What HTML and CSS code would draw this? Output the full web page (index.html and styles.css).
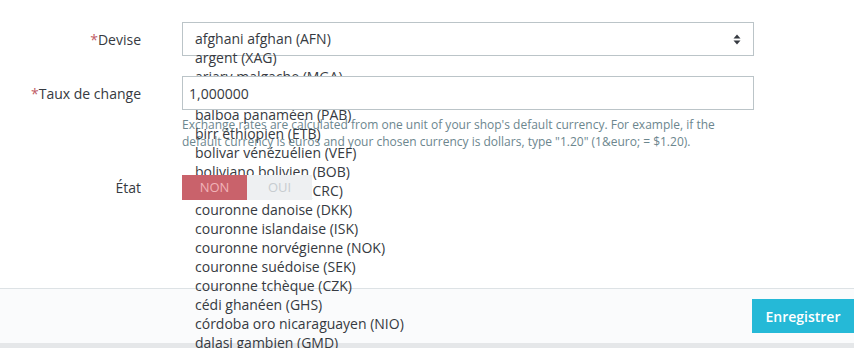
FILE: index.html
```html
<!DOCTYPE html>
<html lang="fr">
<head>
    <meta charset="UTF-8">
    <meta name="viewport" content="width=device-width, initial-scale=1.0">
    <title>Devise</title>
    <link rel="stylesheet" href="styles.css">
</head>
<body>
    <form class="form">
        <div class="row row-select">
            <label class="label"><span class="req">*</span>Devise</label>
            <div class="select">
                <ul class="options">
                    <li>afghani afghan (AFN)</li>
                    <li>argent (XAG)</li>
                    <li>ariary malgache (MGA)</li>
                    <li>baht thaïlandais (THB)</li>
                    <li>balboa panaméen (PAB)</li>
                    <li>birr éthiopien (ETB)</li>
                    <li>bolivar vénézuélien (VEF)</li>
                    <li>boliviano bolivien (BOB)</li>
                    <li>colón costaricain (CRC)</li>
                    <li>couronne danoise (DKK)</li>
                    <li>couronne islandaise (ISK)</li>
                    <li>couronne norvégienne (NOK)</li>
                    <li>couronne suédoise (SEK)</li>
                    <li>couronne tchèque (CZK)</li>
                    <li>cédi ghanéen (GHS)</li>
                    <li>córdoba oro nicaraguayen (NIO)</li>
                    <li>dalasi gambien (GMD)</li>
                </ul>
                <svg class="arrow" width="8" height="11" viewBox="0 0 8 11">
                    <path d="M4 0.5 L7.5 4.5 H0.5 Z M4 10.5 L7.5 6.5 H0.5 Z" fill="#363a41"/>
                </svg>
            </div>
        </div>

        <div class="row row-rate">
            <label class="label" for="rate"><span class="req">*</span>Taux de change</label>
            <div class="control">
                <input type="text" id="rate" class="input" value="1,000000">
                <p class="help">Exchange rates are calculated from one unit of your shop's default currency. For example, if the default currency is euros and your chosen currency is dollars, type "1.20" (1&amp;euro; = $1.20).</p>
            </div>
        </div>

        <div class="row row-state">
            <label class="label">État</label>
            <div class="switch">
                <span class="switch-off">NON</span>
                <span class="switch-on">OUI</span>
            </div>
        </div>
    </form>

    <div class="footer">
        <button type="submit" class="btn-save">Enregistrer</button>
    </div>
    <div class="page-end"></div>
</body>
</html>
```

FILE: styles.css
```css
html,
body {
    overflow: hidden;
}

body {
    margin: 0;
    font-family: "Open Sans", Arial, sans-serif;
    font-size: 14px;
    color: #363a41;
    background: #fff;
}

.form {
    padding-top: 22px;
    height: 266px;
}

.row {
    display: flex;
}

.label {
    width: 141px;
    margin-right: 41px;
    text-align: right;
    flex-shrink: 0;
}

.req {
    color: #c05c67;
}

.row-select {
    height: 34px;
    margin-bottom: 20px;
}

.row-select .label {
    line-height: 36px;
}

.select {
    position: relative;
    box-sizing: border-box;
    width: 572px;
    height: 34px;
    border: 1px solid #bbc4c8;
    padding: 6px 12px 0;
}

.options {
    list-style: none;
    margin: 0;
    padding: 0;
    line-height: 19px;
    white-space: nowrap;
}

.arrow {
    position: absolute;
    right: 12px;
    top: 11px;
}

.row-rate .label {
    line-height: 36px;
}

.control {
    width: 572px;
}

.input {
    position: relative;
    z-index: 1;
    display: block;
    box-sizing: border-box;
    width: 572px;
    height: 34px;
    margin: 0;
    border: 1px solid #bbc4c8;
    padding: 0 6px;
    font-family: inherit;
    font-size: 14px;
    color: #363a41;
    background: #fff;
    outline: none;
}

.help {
    margin: 6px 0 0;
    font-size: 12px;
    line-height: 17px;
    color: #6c868e;
}

.row-state {
    margin-top: 25px;
}

.row-state .label {
    line-height: 25px;
}

.switch {
    position: relative;
    z-index: 1;
    display: flex;
    font-size: 13px;
    line-height: 25px;
    text-align: center;
}

.switch-off {
    width: 65px;
    background: #c9626b;
    color: #f1b3b8;
}

.switch-on {
    width: 65px;
    background: #eef0f2;
    color: #c7ccd0;
}

.footer {
    display: flex;
    justify-content: flex-end;
    height: 44px;
    border-top: 1px solid #dde2e5;
    background: #fafbfc;
    padding-top: 10px;
}

.btn-save {
    height: 34px;
    width: 102px;
    padding: 0;
    border: none;
    background-color: #25b9d7;
    color: #fff;
    font-family: "Open Sans", Arial, sans-serif;
    font-size: 14px;
    font-weight: 600;
    cursor: pointer;
}

.page-end {
    height: 5px;
    background: #e5e7e9;
}
```
